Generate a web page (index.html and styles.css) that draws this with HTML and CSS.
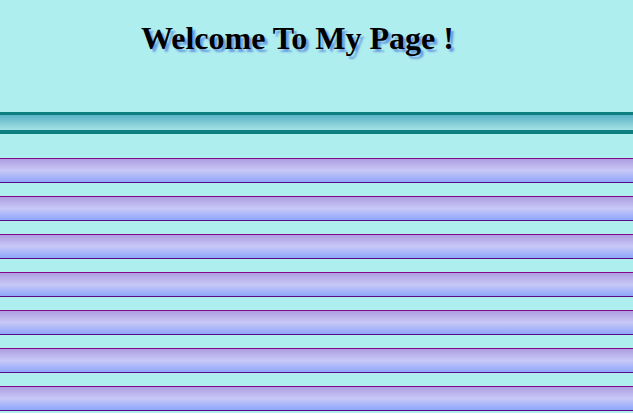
FILE: index.html
```html
<!DOCTYPE html>
<html>
<head>
<meta charset="utf-8">
<link rel="stylesheet" href="styles.css">
</head>
<body>
<header class="top">
  <h1 class="title">Welcome To My Page !</h1>
</header>
<div class="band"></div>
<div class="bars">
  <div class="bar"></div>
  <div class="bar"></div>
  <div class="bar"></div>
  <div class="bar"></div>
  <div class="bar"></div>
  <div class="bar"></div>
  <div class="bar"></div>
</div>
</body>
</html>
```
FILE: styles.css
```css
html, body {
  margin: 0;
  padding: 0;
  background: #afeeee;
}
body {
  font-family: "Liberation Serif", "Times New Roman", serif;
}
.top {
  height: 112px;
  padding-left: 141px;
  box-sizing: border-box;
}
.title {
  margin: 0;
  padding-top: 18px;
  font-size: 32px;
  font-weight: bold;
  line-height: 40px;
  color: #000;
  text-shadow: 3px 3px 2px #6a9ee0;
}
.band {
  height: 15px;
  border-top: 3px solid #0e7f80;
  border-bottom: 4px solid #0e7f80;
  background: linear-gradient(to bottom, #5ab3c6, #a4e2e4);
}
.bars {
  display: flex;
  flex-direction: column;
  gap: 13px;
  padding-top: 24px;
}
.bar {
  height: 23px;
  border-top: 1px solid #86078a;
  border-bottom: 1px solid #5a0c86;
  background: linear-gradient(to bottom, #ad9ee0 0%, #c8c8f7 50%, #8ea6fb 100%);
}
```
